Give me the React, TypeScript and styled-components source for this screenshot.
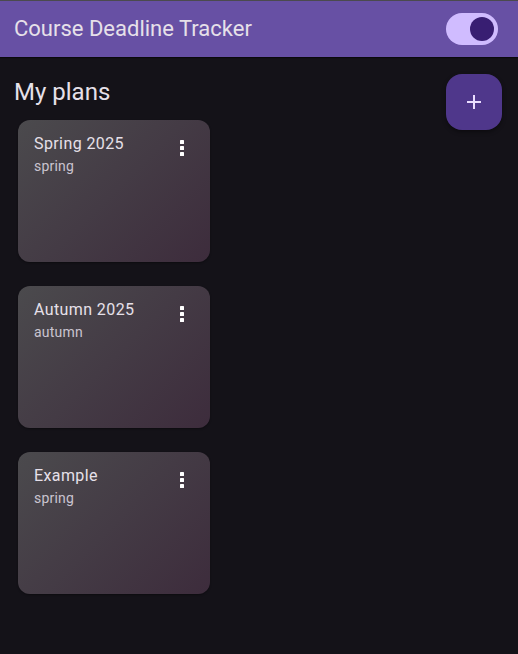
import React from "react";
import styled, { createGlobalStyle } from "styled-components";

const GlobalStyle = createGlobalStyle`
  html, body {
    margin: 0;
    padding: 0;
    background: #141218;
    font-family: Roboto, "Noto Sans", "Liberation Sans", sans-serif;
  }
  * { box-sizing: border-box; }
`;

const Page = styled.div`
  min-height: 654px;
  background: #141218;
  border-top: 1px solid #4b4a4e;
`;

const AppBar = styled.header`
  height: 56px;
  background: #6750a4;
  display: flex;
  align-items: center;
  justify-content: space-between;
  padding: 0 20px 0 14px;
  box-shadow: 0 1px 1px rgba(0, 0, 0, 0.5);
`;

const AppTitle = styled.h1`
  margin: 0;
  font-size: 22px;
  line-height: 28px;
  font-weight: 400;
  color: #e6e0e9;
`;

const SwitchTrack = styled.div<{ $on: boolean }>`
  width: 52px;
  height: 32px;
  border-radius: 16px;
  background: ${(p) => (p.$on ? "#d0bcff" : "#36343b")};
  display: flex;
  align-items: center;
  justify-content: ${(p) => (p.$on ? "flex-end" : "flex-start")};
  padding: 0 4px;
`;

const SwitchThumb = styled.div`
  width: 24px;
  height: 24px;
  border-radius: 50%;
  background: #381e72;
`;

const Main = styled.main`
  display: flex;
  justify-content: space-between;
  align-items: flex-start;
  padding: 17px 16px 0 14px;
`;

const Column = styled.section`
  display: flex;
  flex-direction: column;
`;

const Heading = styled.h2`
  margin: 2px 0 12px 0;
  font-size: 24px;
  line-height: 32px;
  font-weight: 400;
  color: #e6e0e9;
`;

const CardList = styled.div`
  display: flex;
  flex-direction: column;
  gap: 24px;
  padding-left: 4px;
`;

const Card = styled.article`
  width: 192px;
  height: 142px;
  border-radius: 12px;
  background: linear-gradient(135deg, #4b4a4d 0%, #443b45 50%, #3d2c3c 100%);
  box-shadow: 0 1px 2px rgba(0, 0, 0, 0.35);
  display: flex;
  justify-content: space-between;
  align-items: flex-start;
  padding: 12px 16px 0 16px;
`;

const CardText = styled.div`
  display: flex;
  flex-direction: column;
`;

const CardTitle = styled.div`
  font-size: 16px;
  line-height: 24px;
  font-weight: 400;
  color: #e6e0e9;
  letter-spacing: 0.4px;
`;

const CardSub = styled.div`
  font-size: 14px;
  line-height: 20px;
  color: #cac4d0;
  letter-spacing: 0.2px;
`;

const MenuButton = styled.button`
  border: none;
  background: transparent;
  padding: 0;
  margin-top: 4px;
  width: 24px;
  height: 24px;
  display: flex;
  align-items: center;
  justify-content: center;
  color: #ffffff;
`;

const Fab = styled.button`
  width: 56px;
  height: 56px;
  border: none;
  border-radius: 16px;
  background: #4f378b;
  color: #eaddff;
  display: flex;
  align-items: center;
  justify-content: center;
  box-shadow: 0 2px 4px rgba(0, 0, 0, 0.4);
  padding: 0;
`;

const MoreVert = () => (
  <svg width="24" height="24" viewBox="0 0 24 24" fill="currentColor">
    <rect x="10" y="4" width="4" height="4" rx="0.6" />
    <rect x="10" y="10" width="4" height="4" rx="0.6" />
    <rect x="10" y="16" width="4" height="4" rx="0.6" />
  </svg>
);

const Plus = () => (
  <svg width="24" height="24" viewBox="0 0 24 24" fill="currentColor">
    <path d="M19 13h-6v6h-2v-6H5v-2h6V5h2v6h6v2z" />
  </svg>
);

const plans = [
  { title: "Spring 2025", season: "spring" },
  { title: "Autumn 2025", season: "autumn" },
  { title: "Example", season: "spring" },
];

export default function App() {
  return (
    <>
      <GlobalStyle />
      <Page>
        <AppBar>
          <AppTitle>Course Deadline Tracker</AppTitle>
          <SwitchTrack $on={true}>
            <SwitchThumb />
          </SwitchTrack>
        </AppBar>
        <Main>
          <Column>
            <Heading>My plans</Heading>
            <CardList>
              {plans.map((p) => (
                <Card key={p.title}>
                  <CardText>
                    <CardTitle>{p.title}</CardTitle>
                    <CardSub>{p.season}</CardSub>
                  </CardText>
                  <MenuButton aria-label="more">
                    <MoreVert />
                  </MenuButton>
                </Card>
              ))}
            </CardList>
          </Column>
          <Fab aria-label="add">
            <Plus />
          </Fab>
        </Main>
      </Page>
    </>
  );
}
